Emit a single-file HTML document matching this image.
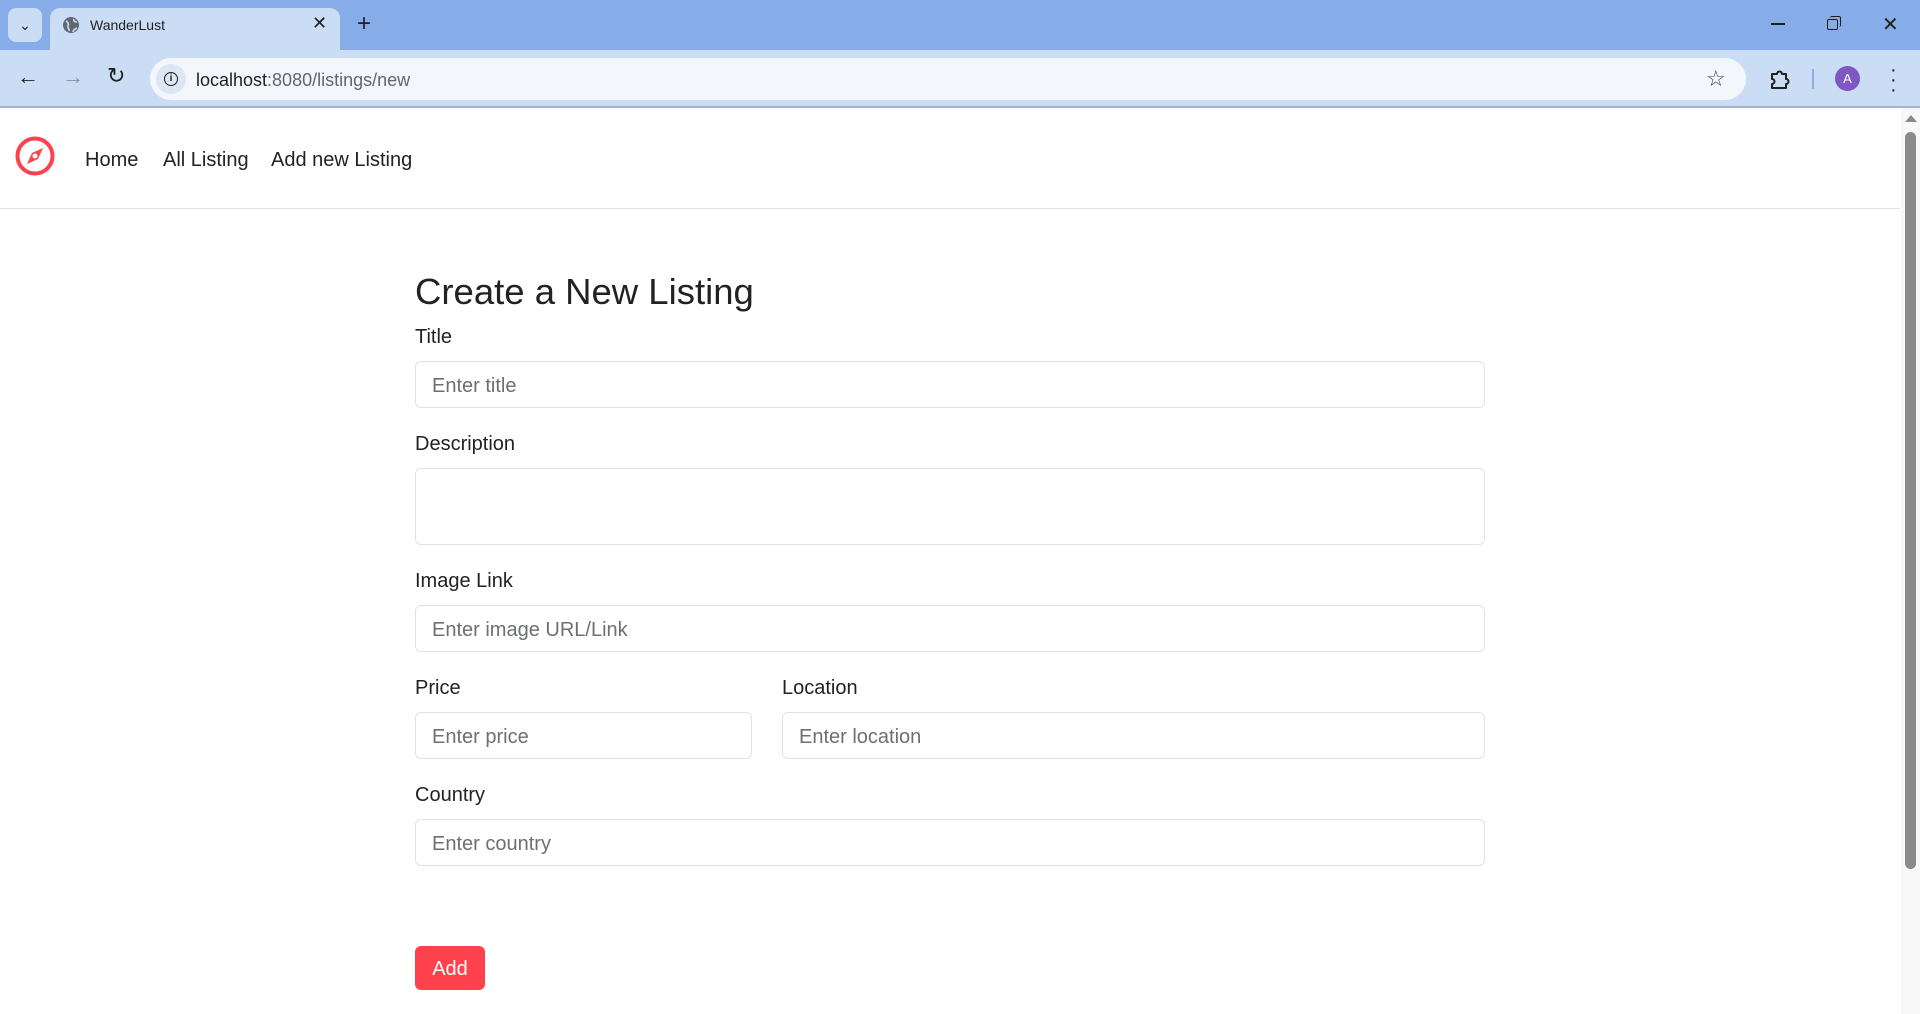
<!DOCTYPE html>
<html><head><meta charset="utf-8"><style>
*{box-sizing:border-box;margin:0;padding:0}
body{width:1920px;height:1014px;overflow:hidden;background:#fff;font-family:"Liberation Sans",sans-serif;position:relative;color:#222}
.tabs{position:absolute;left:0;top:0;width:1920px;height:50px;background:#86ade8}
.toolbar{position:absolute;left:0;top:50px;width:1920px;height:58px;background:#cbdcf5;border-bottom:2px solid #a4b3cc}
.tab{position:absolute;left:50px;top:8px;width:290px;height:44px;background:#cbdcf5;border-radius:10px 10px 0 0}
.abs{position:absolute}
.omni{position:absolute;left:150px;top:8px;width:1596px;height:42px;background:#f3f6fb;border-radius:21px}
.nav{position:absolute;left:0;top:108px;width:1900px;height:101px;border-bottom:1px solid #dee2e6}
.nav a{position:absolute;top:41px;font-size:20px;color:#222;text-decoration:none}
label{position:absolute;left:415px;font-size:20px;color:#222}
.in{position:absolute;border:1px solid #dee2e6;border-radius:6px;height:47px;font-size:20px;color:#6c6f73;padding:13px 16px 0}
.sb{position:absolute;left:1901px;top:108px;width:19px;height:906px;background:#f8f8f8}
</style></head><body>
<div class="tabs">
 <div class="abs" style="left:8px;top:8px;width:34px;height:34px;background:#cbdcf5;border-radius:8px;text-align:center;font-size:14px;line-height:34px">&#8964;</div>
 <div class="tab">
  <svg class="abs" style="left:12px;top:8px" width="18" height="18" viewBox="0 0 18 18"><circle cx="9" cy="9" r="8" fill="#606770"/><path d="M4 5c2 1 3 3 2 5s2 3 1 5M12 3c-1 2 1 3 3 3M11 16c0-2 2-3 4-4" stroke="#cbdcf5" stroke-width="1.6" fill="none"/></svg>
  <div class="abs" style="left:40px;top:9px;font-size:14px;color:#1f1f1f">WanderLust</div>
  <div class="abs" style="left:262px;top:5px;font-size:18px;color:#1f1f1f">✕</div>
 </div>
 <div class="abs" style="left:357px;top:10px;font-size:24px;color:#1f1f1f">+</div>
 <div class="abs" style="left:1771px;top:23px;width:14px;height:1.5px;background:#1f1f1f"></div>
 <div class="abs" style="left:1827px;top:19px;width:11px;height:11px;border:1.5px solid #1f1f1f;border-radius:2px"></div>
 <div class="abs" style="left:1830px;top:16px;width:11px;height:11px;border-top:1.5px solid #1f1f1f;border-right:1.5px solid #1f1f1f;border-radius:2px"></div>
 <div class="abs" style="left:1882px;top:12px;font-size:20px;color:#1f1f1f">✕</div>
</div>
<div class="toolbar">
 <div class="abs" style="left:17px;top:14px;font-size:22px;color:#1f1f1f">←</div>
 <div class="abs" style="left:62px;top:14px;font-size:22px;color:#8a919a">→</div>
 <div class="abs" style="left:107px;top:13px;font-size:22px;color:#1f1f1f">↻</div>
 <div class="omni">
  <div class="abs" style="left:6px;top:6px;width:30px;height:30px;border-radius:15px;background:#dce6f5"></div>
  <div class="abs" style="left:14px;top:14px;width:14px;height:14px;border:1.6px solid #1f1f1f;border-radius:7px;font-size:10px;text-align:center;line-height:11px;font-weight:bold">i</div>
  <div class="abs" style="left:46px;top:12px;font-size:18px;color:#1f1f1f">localhost<span style="color:#606770">:8080/listings/new</span></div>
  <div class="abs" style="left:1556px;top:8px;font-size:22px;color:#444">☆</div>
 </div>
 <svg class="abs" style="left:1770px;top:18px" width="22" height="22" viewBox="0 0 22 22"><path d="M2 6h5a2.5 2.5 0 0 1 5 0h4v5a2.5 2.5 0 0 1 0 5v4H2v-4a2.5 2.5 0 0 0 0-5z" fill="none" stroke="#1f1f1f" stroke-width="2" stroke-linejoin="round"/></svg>
 <div class="abs" style="left:1812px;top:19px;width:2px;height:20px;background:#8ab0ec"></div>
 <div class="abs" style="left:1835px;top:16px;width:25px;height:25px;border-radius:13px;background:#7e57c2;color:#fff;font-size:13px;text-align:center;line-height:25px">A</div>
 <div class="abs" style="left:1890px;top:15px;font-size:20px;color:#1f1f1f;line-height:10px">·<br>·<br>·</div>
</div>
<div class="nav">
 <svg class="abs" style="left:15px;top:28px" width="40" height="40" viewBox="0 0 40 40"><circle cx="20" cy="20" r="17.5" fill="none" stroke="#fe424d" stroke-width="4"/><path d="M28 12 L23 23 L12 28 L17 17Z" fill="#fe424d"/><circle cx="20" cy="20" r="2.5" fill="#fff"/></svg>
 <a style="left:85px">Home</a><a style="left:163px">All Listing</a><a style="left:271px">Add new Listing</a>
</div>
<div class="abs" style="left:415px;top:271px;font-size:36.5px;color:#222">Create a New Listing</div>
<label style="top:326px">Title</label>
<div class="in" style="left:415px;top:361px;width:1070px">Enter title</div>
<label style="top:433px">Description</label>
<div class="in" style="left:415px;top:468px;width:1070px;height:77px"></div>
<label style="top:570px">Image Link</label>
<div class="in" style="left:415px;top:605px;width:1070px">Enter image URL/Link</div>
<label style="top:677px">Price</label>
<div class="in" style="left:415px;top:712px;width:337px">Enter price</div>
<label style="top:677px;left:782px">Location</label>
<div class="in" style="left:782px;top:712px;width:703px">Enter location</div>
<label style="top:784px">Country</label>
<div class="in" style="left:415px;top:819px;width:1070px">Enter country</div>
<div class="abs" style="left:415px;top:946px;width:70px;height:44px;background:#fe424d;border-radius:6px;color:#fff;font-size:20px;text-align:center;line-height:46px">Add</div>
<div class="sb"><div class="abs" style="left:4px;top:24px;width:11px;height:737px;background:#8a8a8a;border-radius:6px"></div>
<div class="abs" style="left:4px;top:7px;width:0;height:0;border-left:6px solid transparent;border-right:6px solid transparent;border-bottom:7px solid #8a8a8a"></div></div>
</body></html>
